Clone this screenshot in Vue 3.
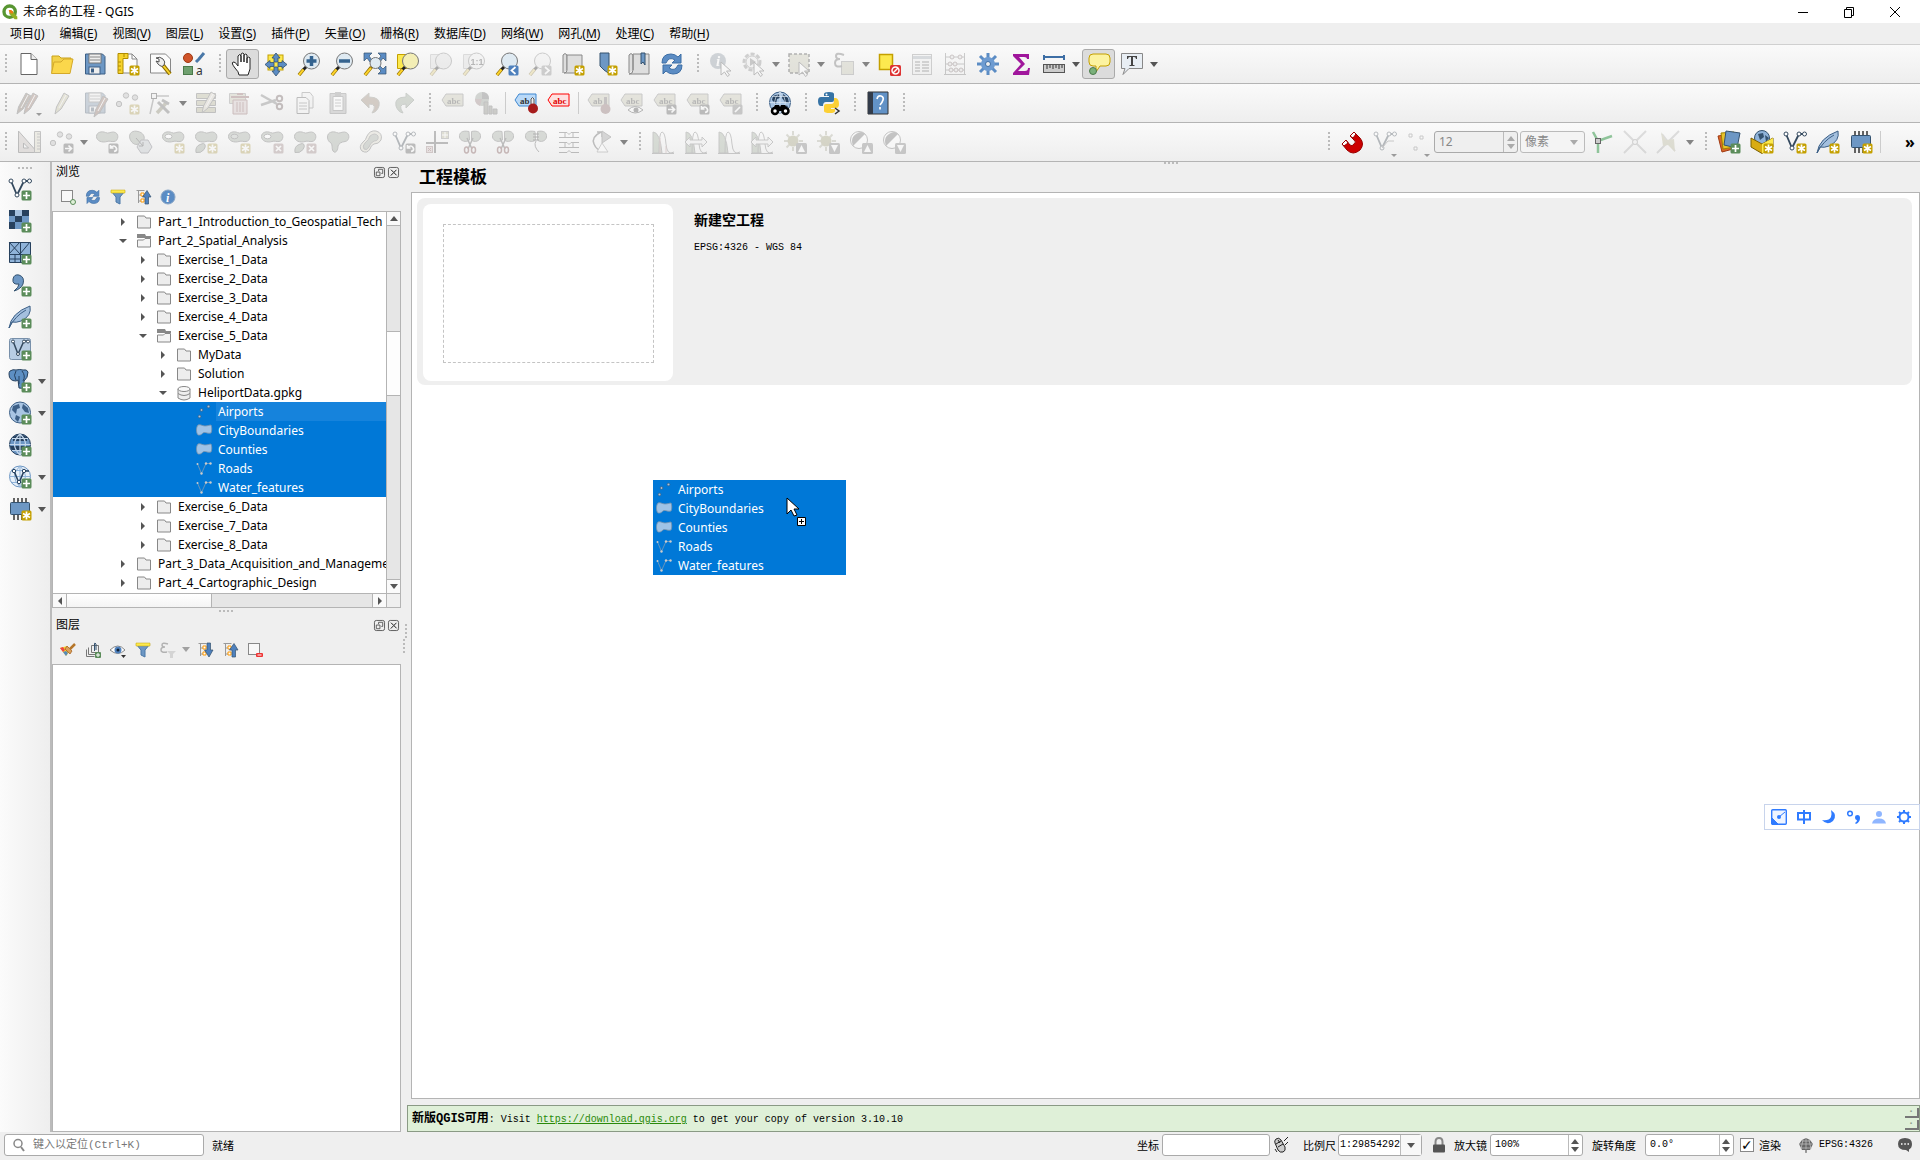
<template>
  <div class="app">
    <header class="titlebar">
      <svg class="titlebar__logo" viewBox="0 0 24 24" v-html="icons.qgis"></svg>
      <span class="titlebar__text">未命名的工程 - QGIS</span>
      <div class="titlebar__controls">
        <button v-for="c in windowControls" :key="c.label" :aria-label="c.label">
          <svg viewBox="0 0 12 12"><path :d="c.path" fill="none" stroke="#000" /></svg>
        </button>
      </div>
    </header>

    <nav class="menubar">
      <button v-for="m in menus" :key="m[1]">{{ m[0] }}(<u>{{ m[1] }}</u>)</button>
    </nav>

    <div v-for="(bar, n) in toolbars" :key="n" class="toolbar">
      <template v-for="(item, k) in bar" :key="k">
        <span v-if="item === '|'" class="toolbar__handle"></span>
        <span v-else-if="item === '-'" class="toolbar__sep"></span>
        <span v-else-if="item === '>'" class="toolbar__space"></span>
        <template v-else-if="item === 'tolerance'">
          <div class="spin spin--tolerance">
            <input aria-label="捕捉容差" value="12" disabled />
            <span class="spin__buttons"><button v-for="d in spinArrows" :key="d" aria-label="步进" disabled><svg viewBox="0 0 8 5"><path :d="d" fill="#aaa" /></svg></button></span>
          </div>
          <div class="unit">
            <select aria-label="捕捉单位" disabled><option>像素</option></select>
            <svg viewBox="0 0 8 5"><path d="M0 0h8L4 5z" fill="#aaa" /></svg>
          </div>
        </template>
        <button v-else class="tool" :class="toolClass(item)" :aria-label="item[0]" :disabled="item[1] === 'off'">
          <svg class="tool__icon" viewBox="0 0 24 24" v-html="icons[item[0]]"></svg>
          <svg v-if="item[2]" class="tool__arrow" viewBox="0 0 8 5"><path d="M0 0h8L4 5z" fill="#555" /></svg>
        </button>
      </template>
      <button v-if="n === 2" class="toolbar__more" aria-label="更多">»</button>
    </div>

    <div class="workspace">
      <aside class="sidebar">
        <span class="dots"></span>
        <button v-for="s in sideTools" :key="s[0]" class="sidebar__tool" :aria-label="s[0]">
          <svg class="tool__icon" viewBox="0 0 24 24" v-html="icons[s[0]]"></svg>
          <svg v-if="s[1]" class="tool__arrow" viewBox="0 0 8 5"><path d="M0 0h8L4 5z" fill="#555" /></svg>
        </button>
      </aside>

      <div class="docks">
        <section class="dock">
          <div class="dock__title">
            <h2>浏览</h2>
            <button v-for="b in dockButtons" :key="b[0]" :aria-label="b[0]"><svg viewBox="0 0 12 12"><path :d="b[1]" fill="none" stroke="#555" /></svg></button>
          </div>
          <div class="dock__tools">
            <button v-for="b in browserTools" :key="b" :aria-label="b"><svg viewBox="0 0 16 16" v-html="icons[b]"></svg></button>
          </div>
          <div class="browser">
            <ul class="tree">
              <li v-for="r in tree" :key="r.name" class="tree__row" :class="{ 'tree__row--selected': r.level === 3 }">
                <span class="tree__indent" :style="{ width: r.level * 20 + 'px' }"></span>
                <svg class="tree__arrow" viewBox="0 0 8 8"><path v-if="r.level < 3" :d="r.open ? 'M0 2h8L4 6z' : 'M2 0v8l4-4z'" fill="#555" /></svg>
                <svg class="tree__icon" viewBox="0 0 16 16" v-html="icons[r.icon]"></svg>
                <span class="tree__label" :class="{ 'tree__label--current': r.name === 'Airports' }">{{ r.name }}</span>
              </li>
            </ul>
            <div class="vscroll">
              <button aria-label="向上"><svg viewBox="0 0 8 5"><path d="M0 5h8L4 0z" fill="#555" /></svg></button>
              <span class="vscroll__before"></span>
              <span class="vscroll__thumb"></span>
              <span class="vscroll__after"></span>
              <button aria-label="向下"><svg viewBox="0 0 8 5"><path d="M0 0h8L4 5z" fill="#555" /></svg></button>
            </div>
            <div class="hscroll">
              <button aria-label="向左"><svg viewBox="0 0 8 8"><path d="M6 0v8L2 4z" fill="#555" /></svg></button>
              <span class="hscroll__thumb"></span>
              <span class="hscroll__groove"></span>
              <button aria-label="向右"><svg viewBox="0 0 8 8"><path d="M2 0v8l4-4z" fill="#555" /></svg></button>
            </div>
            <span class="browser__corner"></span>
          </div>
        </section>
        <span class="dots dots--split"></span>
        <section class="dock dock--layers">
          <div class="dock__title">
            <h2>图层</h2>
            <button v-for="b in dockButtons" :key="b[0]" :aria-label="b[0]"><svg viewBox="0 0 12 12"><path :d="b[1]" fill="none" stroke="#555" /></svg></button>
          </div>
          <div class="dock__tools">
            <button v-for="b in layerTools" :key="b" :aria-label="b" :class="{ wide: b === 'epsFilter' }" :disabled="b === 'epsFilter'">
              <svg viewBox="0 0 16 16" v-html="icons[b]"></svg>
              <svg v-if="b === 'epsFilter'" class="tool__arrow" viewBox="0 0 8 5"><path d="M0 0h8L4 5z" fill="#555" /></svg>
            </button>
          </div>
          <div class="layers"></div>
        </section>
      </div>
      <div class="gutter"><span class="dots dots--vertical"></span><span class="dots dots--vertical dots--raised"></span></div>

      <main class="main">
        <h1>工程模板</h1>
        <div class="templates">
          <article class="card">
            <div class="card__preview"><div></div></div>
            <div>
              <h3>新建空工程</h3>
              <p>EPSG:4326 - WGS 84</p>
            </div>
          </article>

          <ul class="drag">
            <li v-for="l in layers" :key="l.name">
              <svg class="tree__icon" viewBox="0 0 16 16" v-html="icons[l.icon]"></svg>{{ l.name }}
            </li>
          </ul>
          <svg class="cursor" viewBox="0 0 22 30">
            <path d="M1 1v16l4-4 3 6 3-1-3-6h5z" fill="#fff" stroke="#000" />
            <path d="M11.500 20.500h8v8h-8z" fill="#fff" stroke="#000" /><path d="M15.500 22v5M13 24.500h5" stroke="#000" />
          </svg>

          <div class="ime">
            <button v-for="i in imeTools" :key="i" :aria-label="i"><svg viewBox="0 0 16 16" v-html="icons[i]"></svg></button>
          </div>
        </div>
        <div class="message">
          <p><b>新版QGIS可用</b>: Visit <a href="https://download.qgis.org">https://download.qgis.org</a> to get your copy of version 3.10.10</p>
          <div class="message__scroll"><button aria-label="上一行">▪</button><button aria-label="下一行">▪</button></div>
        </div>
      </main>
    </div>

    <footer class="status">
      <div class="locator">
        <svg viewBox="0 0 14 14"><circle cx="6" cy="5.500" r="4" fill="none" stroke="#888" stroke-width="1.500" /><path d="M9 9l3 4" stroke="#888" stroke-width="2" /></svg>
        <input aria-label="定位" placeholder="键入以定位(Ctrl+K)" />
      </div>
      <span class="status__ready">就绪</span>
      <label for="coord">坐标</label>
      <input id="coord" class="field field--coord" />
      <button class="status__icon status__icon--mouse" aria-label="切换范围"><svg viewBox="0 0 16 16" v-html="icons.mouse"></svg></button>
      <label for="scale">比例尺</label>
      <div class="combo">
        <input id="scale" value="1:29854292" />
        <button aria-label="比例列表"><svg viewBox="0 0 8 5"><path d="M0 0h8L4 5z" fill="#555" /></svg></button>
      </div>
      <button class="status__icon status__icon--lock" aria-label="锁定比例"><svg viewBox="0 0 16 16" v-html="icons.lock"></svg></button>
      <label for="magnifier">放大镜</label>
      <div class="spin spin--magnifier">
        <input id="magnifier" value="100%" />
        <span class="spin__buttons"><button v-for="d in spinArrows" :key="d" aria-label="步进"><svg viewBox="0 0 8 5"><path :d="d" fill="#555" /></svg></button></span>
      </div>
      <label for="rotation">旋转角度</label>
      <div class="spin spin--rotation">
        <input id="rotation" value="0.0°" />
        <span class="spin__buttons"><button v-for="d in spinArrows" :key="d" aria-label="步进"><svg viewBox="0 0 8 5"><path :d="d" fill="#555" /></svg></button></span>
      </div>
      <label class="render"><input v-model="render" type="checkbox" /><span>渲染</span></label>
      <button class="crs"><svg viewBox="0 0 16 16" v-html="icons.crs"></svg>EPSG:4326</button>
      <button class="status__icon status__icon--log" aria-label="消息"><svg viewBox="0 0 16 16" v-html="icons.log"></svg></button>
    </footer>
  </div>
</template>

<script setup>
import { ref } from 'vue'

const render = ref(true)

const spinArrows = ['M0 5h8L4 0z', 'M0 0h8L4 5z']

const windowControls = [
  { label: '最小化', path: 'M1 6.500h10' },
  { label: '还原', path: 'M1.500 3.500h7v8h-7zM3.500 3.500v-2h7v8h-2' },
  { label: '关闭', path: 'M1 1l10 10M11 1L1 11' },
]

const menus = [
  ['项目', 'J'], ['编辑', 'E'], ['视图', 'V'], ['图层', 'L'], ['设置', 'S'], ['插件', 'P'], ['矢量', 'O'],
  ['栅格', 'R'], ['数据库', 'D'], ['网络', 'W'], ['网孔', 'M'], ['处理', 'C'], ['帮助', 'H'],
]

const on = (...names) => names.map(n => [n])
const off = (...names) => names.map(n => [n, 'off'])

// '|' starts a toolbar, '-' is a separator, '>' takes the free space
const toolbars = [
  [
    '|', ...on('new', 'open', 'save', 'layoutNew', 'layoutManager', 'style'),
    '|', ['pan', 'pressed'], ...on('panSelection', 'zoomIn', 'zoomOut', 'zoomFull', 'zoomSelection'), ...off('zoomLayer', 'zoomNative'),
    ['zoomLast'], ['zoomNext', 'off'], ...on('mapNew', 'bookmarkNew', 'bookmarks', 'refresh'),
    '|', ['identify', 'off'], ['action', 'off', 1], ['select', 'off', 1], ['selectExpr', 'off', 1], ['deselect'],
    ...off('table', 'abacus'), ...on('gear', 'sigma'), ['measure', '', 1], ['tips', 'pressed'], ['annotation', '', 1],
  ],
  [
    '|', ...off('pencils', 'pencil', 'saveEdits', 'addPoint'), ['vertex', 'off', 1],
    ...off('modify', 'trash', 'cut', 'copy', 'paste', 'undo', 'redo'),
    '|', ...off('label', 'diagram'), '-', ...on('labelPin', 'labelRed'), '-',
    ...off('labelHold', 'labelShow', 'labelMove', 'labelRotate', 'labelEdit'),
    '|', ['metasearch'], '|', ['python'], '|', ['help'], '|',
  ],
  [
    '|', ['setSquare', 'off'], ['moveFeature', 'off', 1],
    ...off('rotateFeature', 'simplify', 'addRing', 'addPart', 'fillRing', 'deleteRing', 'deletePart', 'reshape', 'offset',
      'reverse', 'trim', 'splitFeature', 'splitPart', 'merge', 'mergeAttr'),
    ['rotateSymbol', 'off', 1],
    '|', ...off('hist1', 'hist2', 'hist3', 'hist4', 'sunUp', 'sunDown', 'contrastUp', 'contrastDown'),
    '>', '|', ['magnet'], ...off('snapVector', 'snapPoints'), 'tolerance', ['topology'], ['intersection', 'off'], ['tracing', 'off', 1],
    '|', ...on('dataSource', 'geopackage', 'shapefile', 'spatialite', 'memory'), '-',
  ],
]

const toolClass = item => ({
  'tool--off': item[1] === 'off',
  'tool--pressed': item[1] === 'pressed',
  'tool--menu': item[2],
})

const sideTools = [
  ['addVector'], ['addRaster'], ['addMesh'], ['addText'], ['addSpatialite'], ['addVirtual'],
  ['addPostgis', 1], ['addWms', 1], ['addWcs'], ['addWfs', 1], ['memory', 1],
]

const dockButtons = [
  ['浮动', 'M2.500.5h7q2 0 2 2v7q0 2-2 2h-7q-2 0-2-2v-7q0-2 2-2zM2.500 5.500h4v4h-4zM5 4.500v-2h4.500V7H8'],
  ['关闭面板', 'M2.500.5h7q2 0 2 2v7q0 2-2 2h-7q-2 0-2-2v-7q0-2 2-2zM3 3l6 6M9 3L3 9M3.500 3l6 6M9 3.500l-6 6'],
]
const browserTools = ['addLayer', 'refreshSmall', 'filter', 'collapse', 'info']
const layerTools = ['brush', 'addGroup', 'eye', 'filter', 'epsFilter', 'expand', 'collapse', 'removeLayer']
const imeTools = ['imeLogo', 'imeChinese', 'imeMoon', 'imePunct', 'imeUser', 'imeGear']

const layers = [
  { name: 'Airports', icon: 'points' },
  { name: 'CityBoundaries', icon: 'polygon' },
  { name: 'Counties', icon: 'polygon' },
  { name: 'Roads', icon: 'lines' },
  { name: 'Water_features', icon: 'lines' },
]

const folder = (name, level = 1) => ({ name, level, icon: 'folder' })
const openFolder = (name, level) => ({ name, level, icon: 'folderOpen', open: true })

const tree = [
  folder('Part_1_Introduction_to_Geospatial_Tech', 0),
  openFolder('Part_2_Spatial_Analysis', 0),
  folder('Exercise_1_Data'),
  folder('Exercise_2_Data'),
  folder('Exercise_3_Data'),
  folder('Exercise_4_Data'),
  openFolder('Exercise_5_Data', 1),
  folder('MyData', 2),
  folder('Solution', 2),
  { name: 'HeliportData.gpkg', level: 2, icon: 'database', open: true },
  ...layers.map(l => ({ ...l, level: 3 })),
  folder('Exercise_6_Data'),
  folder('Exercise_7_Data'),
  folder('Exercise_8_Data'),
  folder('Part_3_Data_Acquisition_and_Manageme', 0),
  folder('Part_4_Cartographic_Design', 0),
]

// shared icon parts
const badge = (fill, d) => `<rect x="13.500" y="13.500" width="10" height="10" rx="1.500" fill="${fill}"/><path d="${d}" fill="none" stroke="#fff" stroke-width="1.700"/>`
const star = badge('#c4a000', 'M18.500 14.500v8M15 16.500l7 4M22 16.500l-7 4')
const plus = badge('#5b8c5a', 'M18.500 15v7M15 18.500h7')
const cross = badge('#b08080', 'M16 16l5 5M21 16l-5 5')
const arrowRight = badge('#555', 'M15 18.500h6M18.500 15.500l3 3-3 3')
const turn = badge('#555', 'M16 17.500q3-3 5 0t-2 4M15.500 15v3h3')
const up = '<rect x="13" y="13" width="11" height="11" rx="1.500" fill="#777"/><path d="M18.500 15l3.500 7h-7z" fill="#fff"/>'
const down = '<rect x="13" y="13" width="11" height="11" rx="1.500" fill="#777"/><path d="M18.500 22l3.500-7h-7z" fill="#fff"/>'
const lens = (fill = '#dfeaf2') => `<path d="M9.500 14.500L6 18" stroke="#222" stroke-width="3"/><path d="M6.500 17.500L2 23" stroke="#8a6a00" stroke-width="3.500"/><path d="M6.500 17.500L2 23" stroke="#fcd22b" stroke-width="2"/><circle cx="14.500" cy="9" r="8" fill="${fill}" stroke="#777"/>`
const page = '<path d="M3 2h13l5 5v14H3z" fill="#fcfcfc" stroke="#888"/><path d="M16 2v5h5" fill="none" stroke="#888"/>'
const pointer = '<path d="M12 10v13l3.500-3 3 4.500 2-1.500-3-4h4.500z" fill="#fff" stroke="#555"/>'
const pencilAt = (x, y, fill = '#c9c27e') => `<path transform="translate(${x} ${y})" d="M-1 20l1.500-7L8-1l5 3-8 13z" fill="${fill}" stroke="#666"/><path transform="translate(${x} ${y})" d="M3 14l7-13" stroke="#eee"/>`
const tag = (fill, stroke, text, color) => `<path d="M1 9l4-6h17v12H5z" fill="${fill}" stroke="${stroke}"/><text x="6" y="12.500" font-family="Liberation Serif" font-size="9" font-weight="bold" fill="${color}">${text}</text>`
const greyTag = tag('#c6c39a', '#777', 'abc', '#444')
const blob = '<path d="M1.500 6.500C1.500 2 7 1 10.500 2.500c3 1.500 4-.5 8-.5 6 .5 5.500 9 .5 9.500-3 .5-4-1-7 0-5 1.500-10.500-.5-10.500-5z" fill="#98a892" stroke="#666"/>'
const ring = blob + '<ellipse cx="7.500" cy="6.500" rx="3.500" ry="2.300" fill="#fff" stroke="#666"/>'
const part = blob + '<path d="M2 22.500q-1-6 4-8 4-2 5 0 1 2-1 5-3 4-8 3z" fill="#98a892" stroke="#666"/>'
const halves = '<path d="M11 1.500C4 0 1 3 1.500 7s7 6 10 3z" fill="#98a892" stroke="#666"/><path d="M13.500 1.500C20 0 23 3 22.500 7s-6 6-9 3z" fill="#98a892" stroke="#666"/>'
const scissors = '<path d="M9 8l5 11M15 8l-5 11" stroke="#555" stroke-width="1.500"/><ellipse cx="8.500" cy="20" rx="2" ry="3" fill="none" stroke="#944" stroke-width="1.500"/><ellipse cx="15.500" cy="20" rx="2" ry="3" fill="none" stroke="#944" stroke-width="1.500"/>'
const vector = '<path d="M3 4l6 14 7-14h5" fill="none" stroke="#34495e" stroke-width="1.800"/><circle cx="3" cy="4" r="2" fill="#fff" stroke="#34495e"/><circle cx="9" cy="18" r="2" fill="#fff" stroke="#34495e"/><circle cx="16" cy="4" r="2" fill="#fff" stroke="#34495e"/><circle cx="21.500" cy="4" r="2" fill="#fff" stroke="#34495e"/>'
const feather = '<path d="M1 23Q3 8 22 1q2 10-9 15-5 2-9 1z" fill="#a4c0de" stroke="#3c5f86"/><path d="M1 23Q7 11 18 5" fill="none" stroke="#3c5f86"/>'
const globe = (land = '#3c5f86') => `<circle cx="12" cy="11.500" r="10.500" fill="#a9c5e3" stroke="#3c5f86"/><path d="M5 5l6-2 1 4-3 1-1 5-4-4zM15 3l5 4 1 5-4-1-3-4zM8 14l4 2-2 5-3-3zM16 14l4 1-3 4z" fill="${land}"/>`
const grid = '<path d="M12 1v21M1.500 11.500h21M4 5.500h16M4 17.500h16M12 1q-11 10 0 21M12 1q11 10 0 21" fill="none"'
const hist = '<path d="M2 23V2q7 0 9 21z" fill="#98b08c" stroke="#777"/><path d="M1 23.500h22M8 23q0-21 3-21t4 12 8 8" fill="none" stroke="#777"/>'
const wideArrow = '<path d="M1 12l5-5v3h12V7l5 5-5 5v-3H6v3z" fill="#eee" stroke="#777"/>'
const sun = '<path d="M10 1v4M10 17v4M1 11h4M16 11h4M3.500 4.500l3 3M16.500 4.500l-3 3M3.500 17.500l3-3" stroke="#aa8" stroke-width="2"/><circle cx="10" cy="11" r="5.500" fill="#a09c50"/>'
const contrast = '<circle cx="10" cy="10" r="8.500" fill="#fff" stroke="#666"/><path d="M4 16Q1 8 7 4t9 0z" fill="#666"/>'
const dotsTrio = '<circle cx="3" cy="13" r="2.700" fill="#bbb" stroke="#666"/><circle cx="10" cy="4.500" r="2.700" fill="#bbb" stroke="#666"/><circle cx="19" cy="6.500" r="2.700" fill="#bbb" stroke="#666"/>'
const chip = '<path d="M6 1v22M10 1v22M14 1v22M18 1v22" stroke="#333" stroke-width="1.500"/><rect x="2.500" y="5.500" width="19" height="12" rx="1" fill="#6d97c4" stroke="#34526f"/>'
const floppy = '<path d="M2.500 2h17l2.500 2.500V22h-19.500z" fill="#6d97c4" stroke="#3d5f85"/><rect x="6" y="2" width="12" height="9" fill="#eee" stroke="#777"/><path d="M7 5h10M7 8h10" stroke="#888"/><rect x="6" y="15" width="11" height="7" fill="#eee" stroke="#3d5f85"/><path d="M8 16.500h3v4H8z" fill="#3d5f85"/>'
const cycle = '<path d="M2 11Q2 2 11 2q4 0 7 3l3-3v9h-9l3-3q-6-4-9 3z" fill="#5b8cc4" stroke="#3d6ea5"/><path d="M22 13q0 9-9 9-4 0-7-3l-3 3v-9h9l-3 3q6 4 9-3z" fill="#5b8cc4" stroke="#3d6ea5"/>'
const cog = '<path d="M12 1v22M1 12h22M4 4l16 16M20 4L4 20" stroke="#5b8cc4" stroke-width="3"/><circle cx="12" cy="12" r="7" fill="#6d9bd1"/>'
const treeLines = '<path d="M1.500 1.500h8M3.500 2v12M3.500 6h3M3.500 12h3" fill="none" stroke="#999"/><path d="M6 4h3v3H6zM6 10h3v3H6z" fill="#fff" stroke="#f90"/>'

const icons = {
  qgis: '<circle cx="11.500" cy="11.500" r="8.500" fill="none" stroke="#589632" stroke-width="5"/><path d="M11 11h5l7 8v4h-4l-8-8z" fill="#93b023"/><path d="M10 9h4l3 3-2 3-4-3z" fill="#ee7913"/>',

  new: '<path d="M4 1.500h10l6 6v15H4z" fill="#fff" stroke="#666"/><path d="M14 1.500v6h6" fill="#eee" stroke="#666"/>',
  open: '<path d="M2 21V4h7l2 2h10v4" fill="#f3d24a" stroke="#c9a218"/><path d="M1.500 21.500L4 10h7l3-3h9l-3 14.500z" fill="#fbd74b" stroke="#d4a92a"/>',
  save: floppy,
  layoutNew: page + '<path d="M2 1.500h10v5H7v15H2z" fill="#f6d32d" stroke="#b08c00"/><path d="M2 10h3M2 14h3M2 18h3M8 2v3" stroke="#b08c00"/>' + star,
  layoutManager: '<path d="M1.500 2h15l5 5v14h-20z" fill="#fcfcfc" stroke="#888"/><path d="M13 12l8 10" stroke="#8a6a00" stroke-width="4"/><path d="M13 12l8 10" stroke="#f6d32d" stroke-width="2"/><path d="M7 6q4-2 7 1t1 6-6-1L7 9l3 1V7z" fill="#eee" stroke="#555"/>',
  style: '<circle cx="6" cy="6" r="4.500" fill="#d0542a" stroke="#a03810"/><rect x="1.500" y="14.500" width="9" height="8" fill="#6fa06f" stroke="#4a7a4a"/><path d="M14 10l3-3 5-6" stroke="#4a78a8" stroke-width="3"/><text x="14" y="23" font-family="Noto Sans" font-size="12" fill="#333">a</text>',
  pan: '<path d="M8 23q0-3-4-7-4-5-2-6t5 4V4q2-3 3 0v6-8q2-2 3 0v8-7q2-2 3 0v8-5q2-2 3 0v11l-2 6z" fill="#fff" stroke="#222" stroke-linejoin="round"/>',
  panSelection: '<rect x="4" y="3" width="15" height="15" fill="#fce94f" stroke="#c4a000"/><path d="M12 1l4 5h-2v4h-4V6H8zM12 24l4-5h-2v-4h-4v4H8zM1 12.500l5-4v2h4v4H6v2zM23 12.500l-5-4v2h-4v4h4v2z" fill="#5b8cc4" stroke="#34526f" stroke-width=".8"/>',
  zoomIn: lens() + '<path d="M14.500 4v10M9.500 9h10" stroke="#34638f" stroke-width="3.500"/>',
  zoomOut: lens() + '<path d="M9 9h11" stroke="#34638f" stroke-width="3.500"/>',
  zoomFull: '<path d="M1 1h8L6 4l3 4-2 2-3-4-3 3zM23 1h-8l3 3-3 4 2 2 3-4 3 3zM23 22h-8l3-3-3-3 2-2 3 3 3-3z" fill="#5b8cc4" stroke="#34526f" stroke-width=".7"/><circle cx="12.500" cy="11" r="5.500" fill="#dfeaf2" stroke="#777"/><path d="M8.500 15L2 23" stroke="#8a6a00" stroke-width="3.500"/><path d="M8 16l-6 7" stroke="#fcd22b" stroke-width="2"/>',
  zoomSelection: '<path d="M1.500 2.500h12v14h-12z" fill="#fce94f" stroke="#c4a000"/>' + lens('#f3eeb5'),
  zoomLayer: '<path d="M1.500 2.500h12v14h-12z" fill="#ddd" stroke="#aaa"/>' + lens('#ddd'),
  zoomNative: '<path d="M1.500 2.500h12v14h-12z" fill="#ddd" stroke="#aaa"/>' + lens('#eee') + '<text x="8.500" y="12.500" font-family="Liberation Sans" font-weight="bold" font-size="9" fill="#444">1:1</text>',
  zoomLast: lens() + badge('#4f81bd', 'M20.500 15l-4 3.500 4 3.500'),
  zoomNext: lens('#eee') + badge('#888', 'M17 15l4 3.500-4 3.500'),
  mapNew: '<path d="M2 21V3q2-3 4 0v15" fill="#ddd" stroke="#888"/><path d="M6 3h15v18H3q3 0 3-3z" fill="#dedede" stroke="#888"/>' + star,
  bookmarkNew: '<path d="M6 1h9v20.500l-5-3.500-4-4z" fill="#6d97c4" stroke="#34526f"/>' + star,
  bookmarks: '<path d="M2 21V3q2-3 4 0v15M6 2h16v20H2q4 0 4-4z" fill="#dedede" stroke="#888"/><path d="M14 1h4v12l-2-3-2 2z" fill="#6d97c4" stroke="#34526f"/>',
  refresh: cycle,
  identify: '<circle cx="9" cy="9" r="8" fill="#7d93a8"/><text x="7" y="14" font-family="Liberation Serif" font-style="italic" font-weight="bold" font-size="15" fill="#fff">i</text>' + pointer,
  action: '<circle cx="10" cy="10" r="8" fill="#ddd" stroke="#888" stroke-width="3" stroke-dasharray="4 2"/><circle cx="10" cy="10" r="6" fill="#eee" stroke="#888"/><path d="M8 6l6 4-6 4z" fill="#777"/>' + pointer,
  select: '<rect x="2" y="2" width="20" height="19" fill="#c6c39a" stroke="#333" stroke-width="1.500" stroke-dasharray="3 2"/>' + pointer,
  selectExpr: '<rect x="9.500" y="9.500" width="12" height="13" fill="#c6c39a" stroke="#888"/><path d="M12 3q-8-3-8 1 0 3 4 3-5 0-5 4 0 5 7 3" fill="none" stroke="#666" stroke-width="2"/>',
  deselect: '<rect x="2.500" y="2.500" width="13" height="15" fill="#fce94f" stroke="#c4a000" stroke-width="1.500"/><rect x="13" y="13" width="11" height="11" rx="1.500" fill="#d33"/><circle cx="18.500" cy="18.500" r="3.500" fill="none" stroke="#fff" stroke-width="1.500"/><path d="M16 21l5-5" stroke="#fff" stroke-width="1.500"/>',
  table: '<rect x="2.500" y="2.500" width="19" height="20" fill="#eee" stroke="#888"/><path d="M3 4h18v3H3z" fill="#9ab"/><path d="M5 10h5M12 10h7M5 13h5M12 13h7M5 16h5M12 16h7M5 19h5M12 19h7" stroke="#777" stroke-width="1.500"/>',
  abacus: '<path d="M2.500 1v21M21.500 1v21M1 22.500h22M2 5h20M2 12h20M2 18h20" stroke="#777"/><g fill="#ddd" stroke="#866"><circle cx="9" cy="5" r="2"/><circle cx="17" cy="5" r="2"/><circle cx="7" cy="12" r="2"/><circle cx="12" cy="12" r="2"/><circle cx="8" cy="18" r="2"/><circle cx="13" cy="18" r="2"/><circle cx="18" cy="18" r="2"/></g>',
  gear: cog + '<circle cx="12" cy="12" r="2.500" fill="#eee" stroke="#3d6ea5"/>',
  sigma: '<path d="M4 2h16v5h-2q0-2-3-2h-5l6 7-7 7h7q3 0 3-3h2l-1 7H4v-2l8-9-8-8z" fill="#a0169c"/>',
  measure: '<path d="M2 5h20M2 3v5M22 3v5" stroke="#3d6ea5" stroke-width="2"/><rect x="1.500" y="12.500" width="21" height="8" fill="#ccc" stroke="#555"/><path d="M5 13v4M8 13v3M11 13v4M14 13v3M17 13v4M20 13v3" stroke="#333"/>',
  tips: '<path d="M6 2h13q4 0 4 4v4q0 4-4 4h-6l-4 6v-6H6q-4 0-4-4V6q0-4 4-4z" fill="#fcf3a0" stroke="#c4a000"/><circle cx="6" cy="19" r="3.500" fill="#7ab07a" stroke="#4a7a4a"/>',
  annotation: '<path d="M1.500 1.500h21v15H9l-6 6 2-6H1.500z" fill="#e8eef4" stroke="#888"/><path d="M7 4h10v3h-1q0-2-2-2h-1v8h1.500v1h-5v-1H11V5h-1q-2 0-2 2H7z" fill="#444"/>',

  pencils: pencilAt(1, 3, '#8a6a50') + pencilAt(8, 3, '#a86a50') + '<path d="M19 22h6l-3 3z" fill="#000"/>',
  pencil: pencilAt(6, 3),
  saveEdits: floppy + pencilAt(12, 6, '#a86a50'),
  addPoint: dotsTrio + star,
  vertex: '<path d="M5 5h15M5 5L1 23" stroke="#777" stroke-width="1.500"/><rect x="2.500" y="2.500" width="5" height="5" fill="#eee" stroke="#333"/><path d="M8 22L18 11" stroke="#8a8450" stroke-width="3.500"/><path d="M9 11l11 11M13 9l7 4" stroke="#666" stroke-width="3"/>',
  modify: '<path d="M2.500 2.500h19v5h-19zM2.500 9.500h19v5h-19zM2.500 16.500h19v5h-19z" fill="#b8b478" stroke="#666"/>' + pencilAt(9, 2, '#d8ccb0'),
  trash: '<path d="M2.500 2.500h16v10h-16z" fill="#c6c39a" stroke="#888"/><path d="M4 6h18M10 3h6" stroke="#a55" stroke-width="2"/><path d="M6 9h14v14H6z" fill="#dbb" stroke="#a55"/><path d="M10 11v10M13 11v10M16 11v10" stroke="#a55"/>',
  cut: '<path d="M1 4l16 9M1 14l15-5" stroke="#777" stroke-width="2.500"/><circle cx="19.500" cy="7.500" r="2.700" fill="none" stroke="#755" stroke-width="2"/><circle cx="19.500" cy="15.500" r="2.700" fill="none" stroke="#755" stroke-width="2"/>',
  copy: '<path d="M9 1.500h8l3 4V17H9z" fill="#eee" stroke="#777"/><path d="M4 6.500h9l3 3v13H4z" fill="#f4f4f4" stroke="#555"/><path d="M6 12h8M6 15h8M6 18h8" stroke="#777"/>',
  paste: '<path d="M4 2.500h16v20H4z" fill="#aaa" stroke="#777"/><path d="M7 5.500h10v14H7z" fill="#fff" stroke="#777"/><path d="M9 1h6v4H9z" fill="#888"/><path d="M9 9h6M9 12h6M9 15h6" stroke="#888"/>',
  undo: '<path d="M2 9l8-7v4q12 0 10 9-2 6-7 7 6-9-3-9v4z" fill="#a8805c" stroke="#887"/>',
  redo: '<path d="M22 9l-8-7v4Q2 6 4 15q2 6 7 7-6-9 3-9v4z" fill="#90a888" stroke="#787"/>',
  label: greyTag,
  diagram: '<circle cx="8" cy="8" r="7" fill="#8a9a89"/><path d="M8 8V1q7 0 7 7z" fill="#666"/><path d="M8 8l-2 7Q1 13 1 8z" fill="#a77"/><path d="M10 11h4v12h-4zM15 15h3v8h-3zM19 18h4v5h-4z" fill="#887" stroke="#666"/>',
  labelPin: tag('#b9d9f8', '#3f87cf', 'ab', '#333') + '<path d="M18.500 7v7" stroke="#eee" stroke-width="4"/><path d="M17 13V8q1.500-3 3 0v5" fill="none" stroke="#555"/><circle cx="19" cy="17.500" r="5" fill="#a61c1c"/>',
  labelRed: tag('#fde0e0', '#f00', 'abc', '#e00000'),
  labelHold: tag('#c6c39a', '#777', 'ab', '#444') + '<path d="M18.500 6v8" stroke="#766" stroke-width="3"/><circle cx="18.500" cy="18" r="5" fill="#a06060"/>',
  labelShow: greyTag + '<path d="M8 19q7-7 15 0-8 6-15 0z" fill="#fff" stroke="#444"/><circle cx="16" cy="19" r="2.500" fill="#444"/>',
  labelMove: greyTag + arrowRight,
  labelRotate: greyTag + turn,
  labelEdit: greyTag + badge('#777', 'M16 21l5-5'),
  metasearch: globe('#27415e') + grid + ' stroke="#dce8f4" stroke-width=".7"/>' + '<path d="M4 20l3-6h4l1 2 1-2h4l3 6z" fill="#000"/><circle cx="7" cy="20" r="3" fill="#fff" stroke="#000" stroke-width="2.500"/><circle cx="17.500" cy="20" r="3" fill="#fff" stroke="#000" stroke-width="2.500"/>',
  python: '<path d="M7 6V3q0-2 5-2 5 0 5 2v6q0 2-2 2H9q-3 0-3 4H4q-3 0-3-5 0-4 3-4h8V5H7z" fill="#3673a5"/><path d="M17 7h2q3 1 3 6 0 4-3 4h-5v1h4v2q0 2-5 2-6 0-6-2v-5q0-2 2-2h5q3 0 3-3z" fill="#fcd035"/><circle cx="9.500" cy="3.500" r="1" fill="#fff"/><path d="M18 17l4 3-4 3" fill="none" stroke="#333" stroke-width="1.500"/>',
  help: '<path d="M2 1h20v22H2z" fill="#6292c6" stroke="#333"/><path d="M2 1h5v22H2z" fill="#333c4a"/><path d="M11 8q1-4 4-3t2 4-3 5M14 16v2.500" fill="none" stroke="#fff" stroke-width="1.700"/>',

  setSquare: '<path d="M1.500 1v21.500h19zM6.500 13v5h5z" fill="#c8b8b0" stroke="#555" fill-rule="evenodd"/><path d="M17.500 1.500h6v21h-6z" fill="#ddd5b0" stroke="#666"/><path d="M20 4h3M20 7h3M20 10h3M20 13h3M20 16h3M20 19h3" stroke="#777"/>',
  moveFeature: dotsTrio + arrowRight,
  rotateFeature: blob + turn,
  simplify: '<path d="M2 9C0 3 5 0 10 1.500c5 1 7 5 6 8s-3 2-5 4-7 1-9-4.500z" fill="#98a892" stroke="#666"/><path d="M9 17l4-7h7l4 7-4 6h-7z" fill="#b8c4cc" stroke="#667"/><path d="M8 8l7 8M15 12v4h-4" fill="none" stroke="#444"/>',
  addRing: ring + star,
  addPart: part + star,
  fillRing: ring.replace('#fff', '#b3bdb0') + star,
  deleteRing: ring + cross,
  deletePart: part + cross,
  reshape: '<path d="M1.500 7C1.500 2 7 1 10.500 2.500c3 1.500 4-.5 8-.5 6 .5 5.500 9 .5 9.500-4 .5-6 2-7 4.500 0 4-2 7-4 6-3-2-1-7-3-9-2-1-3.500-3-3.500-6z" fill="#98a892" stroke="#666"/>',
  offset: '<path d="M3 21q-4-4 1-9 3-2 4-6 3-6 9-5 7 2 5 9-2 4-7 4-3 1-4 5-3 5-8 2z" fill="#ddd8b8" stroke="#666"/><path d="M5 19q-2-3 1-6 4-3 5-7 5-4 8 0 1 5-4 5-4 2-5 6-2 4-5 2z" fill="#98a892" stroke="#777"/>',
  reverse: vector + turn,
  trim: '<path d="M10 1v22M1 13h22" stroke="#555" stroke-width="2"/><rect x="16.500" y="1.500" width="7" height="7" fill="#b8b478" stroke="#888"/><path d="M20 2v6M17 5h6" stroke="#fff"/><rect x="1.500" y="16.500" width="6" height="6" fill="#dbb" stroke="#a77"/><path d="M3 18l3 3M6 18l-3 3" stroke="#a55"/>',
  splitFeature: halves + scissors,
  splitPart: halves + scissors,
  merge: halves + '<path d="M9 4h6M9 7h6M9 10h6" stroke="#333"/><path d="M12 11q-3 5 3 11" fill="none" stroke="#555"/>',
  mergeAttr: '<path d="M2 2.500h8l2 2 2-2h8M2 7.500h20M2 12.500h8l2 2 2-2h8M2 17.500h20M2 22.500h8l2-2 2 2h8M8 3v4M16 3v4M8 13v4M16 13v4" fill="none" stroke="#555"/>',
  rotateSymbol: '<path d="M11 2Q1 7 4 14t7 5M7 2h5v5" fill="none" stroke="#555" stroke-width="1.500"/><path d="M12 1l9 6-9 6z" fill="#999" stroke="#666"/><path d="M12 13l6 9H7z" fill="#fff" stroke="#888"/>',
  hist1: hist + '<path d="M9 23V8M15 23v-7" stroke="#c88"/>',
  hist2: hist + wideArrow,
  hist3: hist,
  hist4: hist + wideArrow,
  sunUp: sun + up,
  sunDown: sun + down,
  contrastUp: contrast + up,
  contrastDown: contrast + down,
  magnet: '<path d="M2 14l4-4 4 5q2 2 4-1 3-2 0-4l-4-4 4-4 6 6q5 6 0 12-7 6-13 0z" fill="#c00" stroke="#900"/><path d="M2 14l4-4 2 3-4 3zM10 6l4-4 2 2-3 4z" fill="#fff" stroke="#900"/>',
  snapVector: vector + '<path d="M9 18l6-7h6" fill="none" stroke="#777"/><path d="M18 24h6l-3 3z" fill="#000"/>',
  snapPoints: '<path d="M3 4h3v3H3zM14 6h3v3h-3zM8 17h3v3H8z" fill="#fff" stroke="#777"/><path d="M18 24h6l-3 3z" fill="#000"/>',
  topology: '<path d="M3 2l5 9 14-5M8 11v12" fill="none" stroke="#8fc49a" stroke-width="2.500"/><rect x="5.500" y="8.500" width="5" height="5" fill="#ccc" stroke="#666"/>',
  intersection: '<path d="M1 1l22 22M23 1L1 23" stroke="#aaa" stroke-width="2"/><circle cx="12" cy="12" r="2.500" fill="#eee" stroke="#888"/>',
  tracing: '<path d="M1 23L23 1M6 4l13 17" stroke="#aaa" stroke-width="2"/><path d="M5 2l5 8 8-1 1 13-7-7-5 1z" fill="#b8b478"/>',
  dataSource: '<path d="M1 6l12-2 3 15-11 3z" fill="#d8672a" stroke="#a03810"/><path d="M4 3l13-1 1 15-12 2z" fill="#e9c32b" stroke="#a08000"/><path d="M9 1l14 2-3 15-13-3z" fill="#6d97c4" stroke="#34526f"/>' + plus,
  geopackage: '<circle cx="12" cy="8" r="7.500" fill="#8fb3d9" stroke="#34526f"/><path d="M8 4l5-1 1 4-4 3zM15 5l4 3-3 4z" fill="#34526f"/><path d="M1 8l11 6 11-6v9l-11 6.500L1 17z" fill="#d9ac12" stroke="#7a6000"/><path d="M12 14l11-6v9l-11 6.500z" fill="#fce94f"/>' + star,
  shapefile: vector + star,
  spatialite: feather + star,
  memory: chip + star,

  addVector: vector + plus,
  addRaster: '<path d="M1 1h20v19H1z" fill="#6d97c4"/><path d="M1 1h6v6H1zM14 1h7v6h-7zM7 7h7v6H7zM1 13h6v7H1z" fill="#27415e"/><path d="M7 1h7v6H7z" fill="#a4c0de"/>' + plus,
  addMesh: '<path d="M1.500 1.500h21v20h-21z" fill="#8fb3d9" stroke="#27415e"/><path d="M1 13.500h22M12.500 1v21M1 1l11 12M12 1L1 13M22 1L12 13M1 18h11M7 13v9" stroke="#27415e"/>' + plus,
  addText: '<path d="M5 6q1-5 6-4 6 2 4 9-2 5-9 7 5-4 5-7-7 1-6-5z" fill="#6d97c4" stroke="#34526f"/>' + plus,
  addSpatialite: feather + plus,
  addVirtual: '<rect x="1.500" y="1.500" width="21" height="21" rx="2" fill="#b8cde4" stroke="#7890aa"/><path d="M5 4l5 13 6-13h4" fill="none" stroke="#34495e" stroke-width="1.500"/><g fill="#fff" stroke="#34495e"><circle cx="5" cy="4.500" r="1.500"/><circle cx="10" cy="17" r="1.500"/><circle cx="16" cy="4.500" r="1.500"/><circle cx="20" cy="4.500" r="1.500"/></g>' + plus,
  addPostgis: '<path d="M2 2q3-2 6-1 4-1 7 0 4-1 5 2 0 6-4 9v6q-2 2-5 1l-1-8-2 1Q1 12 1 5q0-2 1-3z" fill="#5d8fc3" stroke="#27415e"/><path d="M8 2q-3 4 0 9M14 2q4 5 1 10M11 7v8" fill="none" stroke="#27415e"/>' + plus,
  addWms: globe() + plus,
  addWcs: '<circle cx="12" cy="11.500" r="10.500" fill="#6d97c4" stroke="#27415e"/><path d="M5 4q7-5 14 0v4H5zM2 13h20l-2 5H4z" fill="#27415e"/>' + grid + ' stroke="#c5d8ec" stroke-width="1.200"/>' + plus,
  addWfs: '<circle cx="12" cy="11.500" r="10.500" fill="#e8f0f8" stroke="#6d97c4"/>' + grid + ' stroke="#8fb3d9"/>' + '<path d="M6 6l5 12 5-12h5" fill="none" stroke="#27415e" stroke-width="1.600"/><g fill="#fff" stroke="#27415e"><circle cx="6" cy="6" r="1.700"/><circle cx="11" cy="17" r="1.700"/><circle cx="16" cy="6" r="1.700"/></g>' + plus,

  addLayer: '<rect x="1.500" y="1.500" width="11" height="11" fill="#f8f8f8" stroke="#888"/><circle cx="13" cy="13" r="2.500" fill="#dff0d8" stroke="#5b8c5a"/>',
  refreshSmall: '<g transform="scale(.66)">' + cycle + '</g>',
  filter: '<path d="M1 2h14l-5 6v7l-4-2V8z" fill="#6d97c4" stroke="#4a78a8"/><path d="M1 1h14v3H1z" fill="#fce94f" stroke="#c4a000" stroke-width=".5"/>',
  collapse: treeLines + '<path d="M10 15V8H7.500L12 1.500 16 8h-2.500v7z" fill="#4f81bd" stroke="#34526f" stroke-width=".7"/>',
  expand: treeLines + '<path d="M10 1v7H7.500l4.500 7 4-7h-2.500V1z" fill="#4f81bd" stroke="#34526f" stroke-width=".7"/>',
  info: '<circle cx="8" cy="8" r="7" fill="#5b8cc4" stroke="#8aa6c6"/><text x="6" y="12.500" font-family="Liberation Serif" font-style="italic" font-weight="bold" font-size="12" fill="#fff">i</text>',
  brush: '<path d="M0 6l7-2 4 4-5 6z" fill="#f6d32d"/><path d="M0 6l3-1 2 3-2 2z" fill="#e44"/><path d="M3 10l3-1 2 2-2 3z" fill="#58b"/><path d="M7 4l5 5-2 3-5-5z" fill="#d9a05a" stroke="#a05a18" stroke-width=".7"/><path d="M10 7l5-5" stroke="#b5762a" stroke-width="2.500"/>',
  addGroup: '<path d="M1.500 7.500v7h8M3.500 5.500v7h8M6.500 3.500h7v7h-7z" fill="none" stroke="#777"/><path d="M9.500 9V2q0-2 1.500 0v6" fill="none" stroke="#34526f"/><rect x="10" y="10" width="6" height="6" rx="1" fill="#5b8c5a"/><path d="M13 11v4M11 13h4" stroke="#fff"/>',
  eye: '<path d="M0 8q8-8 15 0-7 7-15 0z" fill="#fff" stroke="#888"/><circle cx="8" cy="8" r="3.500" fill="#4f81bd"/><circle cx="8" cy="8" r="1.500" fill="#123"/><path d="M11 13h5l-2.500 3z" fill="#333"/>',
  epsFilter: '<path d="M8 2Q2 0 2 3q0 2 3 2-4 0-4 3t6 2" fill="none" stroke="#777" stroke-width="1.500"/><path d="M7 9h9l-3 3v4h-3v-4z" fill="#bbb"/>',
  removeLayer: '<rect x="1.500" y="1.500" width="11" height="11" fill="#f8f8f8" stroke="#888"/><rect x="9" y="11" width="7" height="4" rx="1" fill="#e33"/><path d="M10.500 13h4" stroke="#fff"/>',

  folder: '<path d="M1.500 2v12h13V4h-4.500l-1.500-2z" fill="#ededed" stroke="#888"/>',
  folderOpen: '<path d="M1 1h8l1 2h5v2H1z" fill="#888"/><path d="M1.500 14v-7h6l1.500-1.500h5.500V14z" fill="#f4f4f4" stroke="#888"/>',
  database: '<path d="M2 4v9q6 4 12 0V4" fill="#eee" stroke="#888"/><ellipse cx="8" cy="4" rx="6" ry="2.500" fill="#f8f8f8" stroke="#888"/><path d="M2 8.500q6 4 12 0" fill="none" stroke="#888"/>',
  points: '<g fill="#a9c5e3" stroke="#456" stroke-width=".6"><circle cx="3.500" cy="12.500" r="1.300"/><circle cx="5.500" cy="6" r="1.300"/><circle cx="12.500" cy="2.500" r="1.300"/></g>',
  polygon: '<path d="M2 2c3-1 4 1 7 1s4-1 6-1c1 2 1 6 0 8-3 1-5-1-7-.5-2 .5-2 3-6 2.500C0 10 0 4 2 2z" fill="#9fc3e6" stroke="#7a93ab" stroke-width=".8"/>',
  lines: '<path d="M1.500 3l4 9.500 4.500-10h4.500" fill="none" stroke="#7f9cb5" stroke-width=".8"/><g fill="#ccc"><circle cx="1.500" cy="3" r="1"/><circle cx="5.500" cy="12.500" r="1.200"/><circle cx="10" cy="2.500" r="1.200"/><circle cx="14.500" cy="2.500" r="1.200"/></g>',

  imeLogo: '<rect x=".7" y=".7" width="14.600" height="14.600" rx="1" fill="#eef4ff" stroke="#2f7bff" stroke-width="1.400"/><path d="M1 9l6 6H1zM8 8l6-5" fill="#2f7bff" stroke="#2f7bff"/><circle cx="8" cy="8" r="2" fill="#2f7bff"/>',
  imeChinese: '<path d="M2 4h12v6.500H2zM8 1v14" fill="none" stroke="#2f7bff" stroke-width="2"/>',
  imeMoon: '<path d="M10 1q7 5 2 11-6 5-11-1 7 1 9-3 1-3 0-7z" fill="#2f7bff"/>',
  imePunct: '<circle cx="4" cy="4.500" r="2.300" fill="none" stroke="#2f7bff" stroke-width="1.500"/><path d="M9 8q0-2 2.500-2T14 9q0 4-4 6l-1-1q2-1 2-3-2 0-2-3z" fill="#2f7bff"/>',
  imeUser: '<circle cx="8" cy="5" r="3" fill="#8fb6ff"/><path d="M1 14.500q1-5 7-5t7 5z" fill="#8fb6ff"/>',
  imeGear: '<circle cx="8" cy="8" r="4.500" fill="none" stroke="#2f7bff" stroke-width="2"/><path d="M8 1v3M8 12v3M1 8h3M12 8h3M3 3l2 2M11 11l2 2M13 3l-2 2M3 13l2-2" stroke="#2f7bff" stroke-width="2"/>',

  mouse: '<path d="M3 2q3-2 5 1l4 7q1 4-2 5t-5-2L2 6Q1 4 3 2z" fill="#ccc" stroke="#222"/><path d="M3 7l5-3M5 3l2 3M5 10l5-3M11 4l4-4M12 8l3-3M2 12l2 3" stroke="#222"/>',
  lock: '<path d="M4.500 8V5q0-4 3.500-4t3.500 4v3" fill="none" stroke="#888" stroke-width="2"/><rect x="2" y="7.500" width="12" height="8" rx="1" fill="#555"/>',
  crs: '<path d="M1 7L4 3l4-2 4 2 3 4-3 6H4z" fill="#666"/><path d="M1 7h14M8 1v14M5 3L3 12M11 3l2 9M3 11h10M4 4h8" stroke="#bbb" stroke-width=".8"/><path d="M8 12v4" stroke="#555"/>',
  log: '<path d="M8 1q7 0 7 6 0 4-3 5.500V15l-3-2Q1 13 1 7q0-6 7-6z" fill="#555"/><path d="M4 7h1.500M7.300 7h1.500M10.500 7H12" stroke="#fff" stroke-width="1.500"/>',
}
</script>

<style>
body { overflow: hidden; }
</style>

<style scoped>
.app { height: 100vh; display: flex; flex-direction: column; background: #efefef; color: #000; font: 12px/16px "Noto Sans", "Noto Sans CJK SC", sans-serif; }
.app * { box-sizing: border-box; }
button { border: 0; padding: 0; background: none; font: inherit; color: inherit; }
input, select { font: inherit; color: #000; min-width: 0; outline: none; }
h1, h2, h3, p, ul { margin: 0; padding: 0; list-style: none; }
svg { display: block; flex: none; overflow: visible; }

.titlebar { flex: none; height: 23px; background: #fff; display: flex; align-items: center; padding-left: 2px; }
.titlebar__logo { width: 16px; height: 16px; margin-right: 5px; }
.titlebar__text { flex: 1; }
.titlebar__controls { display: flex; padding-right: 2px; }
.titlebar__controls button { width: 46px; display: flex; justify-content: center; }
.titlebar__controls svg { width: 12px; height: 12px; }

.menubar { flex: none; height: 22px; display: flex; padding-left: 3px; border-bottom: 1px solid #d0d0d0; }
.menubar button { padding: 0 8px 0 7px; white-space: nowrap; }
.menubar u { text-underline-offset: 2px; }

.toolbar { flex: none; height: 39px; display: flex; align-items: center; background: linear-gradient(#fafafa, #eee); border-bottom: 1px solid #b4b4b4; }
.toolbar__handle { flex: none; width: 12px; height: 20px; margin-left: 4px; background: radial-gradient(circle at 1px 1px, #bbb 1px, transparent 1px) 5px 0 / 4px 4px; background-clip: content-box; padding: 0 3px 0 5px; }
.toolbar__handle:first-child { margin-left: 0; }
.toolbar__sep { flex: none; width: 1px; height: 22px; margin: 0 3px; background: #ccc; }
.toolbar__space { flex: 1; }
.toolbar__more { width: 20px; margin-left: 16px; font-size: 16px; font-weight: bold; }
.tool { flex: none; width: 33px; height: 30px; display: flex; align-items: center; padding-left: 4px; border: 1px solid transparent; border-radius: 3px; }
.tool--menu { width: 45px; }
.tool--pressed { background: #dcdcdc; border-color: #aaa; }
.tool--off svg { opacity: .35; filter: saturate(.5); }
.tool--off .tool__arrow { opacity: .7; }
.tool__icon { width: 24px; height: 24px; }
.tool__arrow { width: 8px; height: 5px; margin-left: 6px; }

.spin { display: flex; height: 22px; border: 1px solid #aaa; border-radius: 3px; background: #fff; }
.spin input { flex: 1; width: 0; border: 0; padding: 0 4px; background: none; }
.spin__buttons { width: 14px; border-left: 1px solid #bbb; display: flex; flex-direction: column; justify-content: center; align-items: center; gap: 3px; }
.spin__buttons svg { width: 8px; height: 5px; }
.spin--tolerance { width: 84px; background: #efefef; }
.spin--tolerance input { color: #888; }
.unit { position: relative; width: 65px; margin-left: 2px; }
.unit select { display: block; width: 100%; height: 22px; appearance: none; border: 1px solid #bbb; border-radius: 3px; padding: 0 4px; background: #f4f4f4; color: #888; opacity: 1; }
.unit svg { position: absolute; right: 7px; top: 9px; width: 8px; height: 5px; }

.workspace { flex: 1; min-height: 0; display: flex; }
.sidebar { width: 52px; flex: none; display: flex; flex-direction: column; background: linear-gradient(90deg, #fbfbfb, #eee); border-right: 2px solid #bbb; padding: 5px 0 0 8px; }
.dots { width: 16px; height: 4px; margin: 0 0 2px 10px; background: radial-gradient(circle at 1px 1px, #bbb 1px, transparent 1px) 0 0 / 4px 4px; }
.sidebar__tool { height: 32px; display: flex; align-items: center; }

.docks { width: 349px; flex: none; display: flex; flex-direction: column; }
.dock { display: flex; flex-direction: column; }
.dock--layers { flex: 1; min-height: 0; }
.dock__title { height: 20px; display: flex; align-items: center; padding: 0 2px 0 4px; gap: 3px; }
.dock__title h2 { flex: 1; font-size: 12px; font-weight: normal; }
.dock__title svg { width: 11px; height: 11px; }
.dock__tools { height: 29px; display: flex; align-items: center; padding-left: 8px; gap: 9px; }
.dock__tools button { display: flex; align-items: center; }
.dock__tools svg { width: 16px; height: 16px; }
.dock__tools .wide { opacity: .5; width: 28px; }
.dock__tools .tool__arrow { width: 8px; height: 5px; margin-left: 6px; }
.browser { display: grid; grid-template-columns: 1fr 14px; grid-template-rows: 381px 14px; border: 1px solid #b4b4b4; background: #fff; }
.tree { overflow: hidden; }
.tree__row { height: 19px; display: flex; align-items: center; padding-left: 66px; white-space: nowrap; }
.tree__row--selected { background: #0078d7; color: #fff; }
.tree__indent { flex: none; }
.tree__arrow { width: 8px; height: 8px; margin-right: 9px; }
.tree__icon { width: 16px; height: 16px; margin-right: 4px; }
.tree__label { padding: 0 0 0 2px; line-height: 19px; }
.tree__label--current { flex: 1; background: #1683dc; }
.vscroll { display: flex; flex-direction: column; border-left: 1px solid #b4b4b4; background: #e6e6e6; }
.vscroll button, .hscroll button { flex: none; width: 13px; height: 13px; display: flex; align-items: center; justify-content: center; background: #fafafa; }
.vscroll button svg { width: 8px; height: 5px; }
.hscroll button svg { width: 8px; height: 8px; }
.vscroll__before { flex: 106; border-top: 1px solid #b4b4b4; }
.vscroll__thumb { flex: 64; background: #fdfdfd; border: solid #b4b4b4; border-width: 1px 0; }
.vscroll__after { flex: 186; border-bottom: 1px solid #b4b4b4; }
.hscroll { display: flex; border-top: 1px solid #b4b4b4; background: #e6e6e6; }
.hscroll__thumb { flex: 145; background: linear-gradient(#fff, #f4f4f4); border: solid #b4b4b4; border-width: 0 1px; }
.hscroll__groove { flex: 161; border-right: 1px solid #b4b4b4; }
.browser__corner { border: solid #b4b4b4; border-width: 1px 0 0 1px; background: #efefef; }
.dots--split { height: 3px; margin: 2px auto; }
.layers { flex: 1; background: #fff; border: 1px solid #b4b4b4; }
.gutter { width: 6px; flex: none; display: flex; align-items: center; justify-content: space-between; padding-left: 2px; }
.dots--vertical { width: 2px; height: 16px; margin: 0; }
.dots--raised { margin-bottom: 30px; }

.main { position: relative; flex: 1; min-width: 0; display: flex; flex-direction: column; }
.main::before { content: ""; position: absolute; left: 50%; top: 0; width: 16px; height: 3px; background: radial-gradient(circle at 1px 1px, #bbb 1px, transparent 1px) 0 0 / 4px 4px; }
.main h1 { height: 30px; font: bold 17px/28px "Noto Sans CJK SC", sans-serif; padding-left: 12px; }
.templates { position: relative; flex: 1; margin: 0 0 6px 4px; border: 1px solid #b4b4b4; background: #fff; padding: 5px; }
.card { display: flex; gap: 21px; margin-right: 2px; padding: 6px 6px 4px; background: #efefef; border-radius: 8px; }
.card__preview { width: 250px; height: 177px; padding: 20px 19px 18px 20px; background: #fff; border-radius: 8px; }
.card__preview div { height: 100%; border: 1px dashed #c4c4c4; }
.card h3 { font: bold 14px/20px "Noto Sans CJK SC", sans-serif; padding-top: 5px; }
.card p { font: 10px/14px "Liberation Mono", monospace; padding-top: 12px; }
.drag { position: absolute; left: 241px; top: 287px; width: 193px; background: #0078d7; color: #fff; }
.drag li { height: 19px; line-height: 18px; display: flex; align-items: center; padding-left: 3px; }
.drag .tree__icon { margin-right: 6px; }
.cursor { position: absolute; left: 374px; top: 304px; width: 22px; height: 30px; }
.ime { position: absolute; right: -1px; top: 611px; height: 26px; width: 156px; display: flex; align-items: center; justify-content: space-between; padding: 0 7px 0 6px; background: #fff; border: 1px solid #c8d4ec; }
.ime svg { width: 16px; height: 16px; }
.message { height: 27px; display: flex; align-items: center; background: #dff0d8; border: 1px solid #8a9a85; padding-left: 4px; font: 10px/14px "Liberation Mono", "Noto Sans CJK SC", monospace; }
.message p { flex: 1; white-space: nowrap; padding-top: 2px; }
.message b { font-size: 12px; }
.message a { color: #2a8a0a; }
.message__scroll { display: flex; flex-direction: column; gap: 2px; }
.message__scroll button { width: 14px; height: 10px; font-size: 6px; line-height: 8px; color: #8a9a85; border: solid #777; border-width: 0 2px 2px 0; }

.status { flex: none; height: 28px; display: flex; align-items: center; padding: 0 7px 2px 4px; font: 11px/16px "Noto Sans CJK SC", sans-serif; white-space: nowrap; }
.locator { width: 200px; height: 22px; display: flex; align-items: center; background: #fff; border: 1px solid #aaa; border-radius: 3px; padding-left: 7px; gap: 7px; }
.locator svg { width: 14px; height: 14px; }
.locator input { flex: 1; border: 0; padding: 0; background: none; }
.locator input::placeholder { color: #777; opacity: 1; }
.status__ready { flex: 1; padding-left: 8px; }
.status input { font-family: "Liberation Mono", "Noto Sans CJK SC", monospace; font-size: 10px; }
.status .locator input { font-size: 11px; }
.field { height: 22px; border: 1px solid #aaa; border-radius: 3px; background: #fff; }
.field--coord { width: 108px; margin-left: 3px; }
.status__icon svg, .crs svg { width: 16px; height: 16px; }
.status__icon--mouse { margin: 0 14px 0 3px; }
.status__icon--lock { margin: 0 7px 0 9px; }
.status__icon--log { margin-left: 24px; }
.combo { display: flex; width: 84px; height: 22px; margin-left: 2px; border: 1px solid #aaa; border-radius: 3px; background: #fff; }
.combo input { flex: 1; width: 0; border: 0; padding: 0; text-align: right; background: none; }
.combo button { width: 21px; border-left: 1px solid #bbb; display: flex; align-items: center; justify-content: center; background: #f8f8f8; }
.combo svg { width: 8px; height: 5px; }
.spin--magnifier { width: 93px; margin: 0 9px 0 3px; }
.spin--rotation { width: 89px; margin: 0 6px 0 9px; }
.render { display: flex; align-items: center; gap: 5px; }
.render input { appearance: none; width: 14px; height: 14px; margin: 0; border: 1px solid #888; background: #fff; }
.render input:checked::before { content: "✓"; display: block; font: bold 14px/12px "DejaVu Sans", sans-serif; text-align: center; }
.crs { display: flex; align-items: center; gap: 5px; margin-left: 17px; font: 10px/16px "Liberation Mono", monospace; }
</style>
